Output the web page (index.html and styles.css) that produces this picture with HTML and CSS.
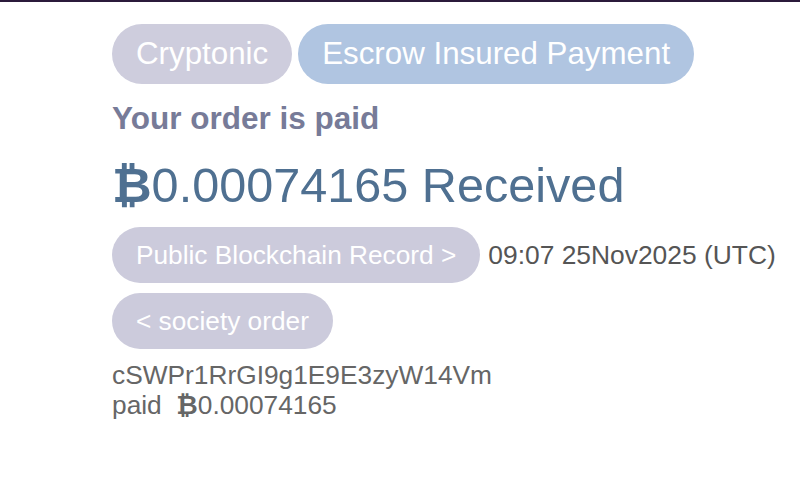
FILE: index.html
```html
<!doctype html>
<html lang="en">
<head>
  <meta charset="utf-8">
  <title>Order paid</title>
  <link rel="stylesheet" href="styles.css">
</head>
<body>
  <div class="order">
    <div class="order__tags">
      <span class="tag tag--brand">Cryptonic</span>
      <span class="tag tag--escrow">Escrow Insured Payment</span>
    </div>
    <h2 class="order__status">Your order is paid</h2>
    <div class="order__amount"><span class="btc">&#x20BF;</span>0.00074165 Received</div>
    <div class="order__record">
      <a class="pill" href="#">Public Blockchain Record &gt;</a>
      <span class="order__time">09:07 25Nov2025 (UTC)</span>
    </div>
    <div class="order__back">
      <a class="pill" href="#">&lt; society order</a>
    </div>
    <div class="order__meta">
      <div>cSWPr1RrGI9g1E9E3zyW14Vm</div>
      <div>paid &nbsp;<span class="btc">&#x20BF;</span>0.00074165</div>
    </div>
  </div>
</body>
</html>
```

FILE: styles.css
```css
html {
  background-color: #fff;
}

body {
  margin: 0;
  border-top: 2px solid #2b1a3b;
  font-family: "Liberation Sans", Arial, sans-serif;
}

.order {
  padding: 22px 0 0 112px;
}

.order__tags {
  display: flex;
  gap: 6px;
}

.tag {
  height: 60px;
  line-height: 60px;
  padding: 0 24px;
  border-radius: 30px;
  font-size: 31.3px;
  color: #fff;
}

.tag--brand {
  background-color: #cecddd;
}

.tag--escrow {
  background-color: #b0c5e1;
}

.order__status {
  margin: 14px 0 0;
  font-size: 31.5px;
  line-height: 40px;
  color: #777b98;
}

.order__amount {
  margin-top: 19px;
  font-size: 48.6px;
  line-height: 56px;
  color: #4f7091;
}

.order__amount .btc {
  font-weight: bold;
}

.order__record {
  display: flex;
  align-items: center;
  gap: 8px;
  margin-top: 14px;
}

.order__back {
  display: flex;
  margin-top: 10px;
}

.pill {
  display: inline-block;
  height: 56px;
  line-height: 56px;
  padding: 0 24px;
  border-radius: 28px;
  background-color: #cccbdc;
  color: #fff;
  font-size: 26.25px;
  text-decoration: none;
}

.order__time {
  font-size: 26.4px;
  color: #555;
}

.order__meta {
  margin-top: 11px;
  font-size: 26.3px;
  line-height: 30px;
  color: #666;
}

.order__meta .btc {
  font-weight: bold;
}
```
